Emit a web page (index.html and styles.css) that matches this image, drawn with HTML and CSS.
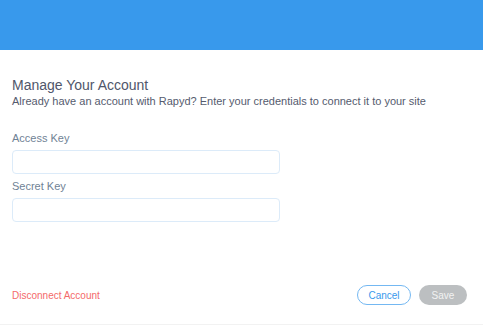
FILE: index.html
```html
<!DOCTYPE html>
<html>

<head>
  <meta charset="UTF-8">
  <title>Manage Your Account</title>
  <link rel="stylesheet" href="styles.css">
</head>

<body>
  <div class="header"></div>

  <div class="container">
    <div class="section-title">Manage Your Account</div>
    <div class="section-subtitle">Already have an account with Rapyd? Enter your credentials to connect it to your site</div>

    <div class="fields">
      <div class="field">
        <label for="accessKey">Access Key</label>
        <input type="text" id="accessKey">
      </div>
      <div class="field">
        <label for="secretKey">Secret Key</label>
        <input type="text" id="secretKey">
      </div>
    </div>
  </div>

  <div class="footer">
    <a class="disconnect" href="#">Disconnect Account</a>
    <div class="actions">
      <button class="btn-cancel">Cancel</button>
      <button class="btn-save" disabled>Save</button>
    </div>
  </div>
</body>

</html>
```

FILE: styles.css
```css
body {
  font-family: 'Liberation Sans', Arial, sans-serif;
  margin: 0;
  padding: 0;
  width: 483px;
  height: 326px;
  background-color: white;
  color: #3b4057;
  display: flex;
  flex-direction: column;
}

.header {
  height: 50px;
  flex-shrink: 0;
  background-color: #3899ec;
}

.container {
  flex: 1;
  padding: 25px 12px 0;
}

.section-title {
  font-size: 14px;
  line-height: 20px;
  color: #50566a;
}

.section-subtitle {
  font-size: 11px;
  line-height: 12px;
  color: #555b6e;
}

.fields {
  margin-top: 24px;
  display: flex;
  flex-direction: column;
  gap: 5px;
}

.field label {
  display: block;
  font-size: 11px;
  line-height: 14px;
  color: #6f8295;
  margin-bottom: 5px;
}

.field input {
  display: block;
  box-sizing: border-box;
  width: 268px;
  height: 24px;
  border: 1px solid #dcebf9;
  border-radius: 4px;
  outline: none;
}

.footer {
  display: flex;
  align-items: center;
  justify-content: space-between;
  flex-shrink: 0;
  padding: 0 16px 0 12px;
  height: 58px;
  margin-bottom: 1px;
  border-bottom: 1px solid #f2f2f2;
}

.disconnect {
  font-size: 10px;
  color: #f46a6a;
  text-decoration: none;
}

.actions {
  display: flex;
  gap: 8px;
}

button {
  font-family: inherit;
  font-size: 10px;
  height: 20px;
  border-radius: 10px;
  padding: 0;
}

.btn-cancel {
  width: 54px;
  border: 1px solid #74b8f2;
  background-color: white;
  color: #3899ec;
}

.btn-save {
  width: 48px;
  border: none;
  background-color: #bcbfc1;
  color: #f2f2f2;
}
```
